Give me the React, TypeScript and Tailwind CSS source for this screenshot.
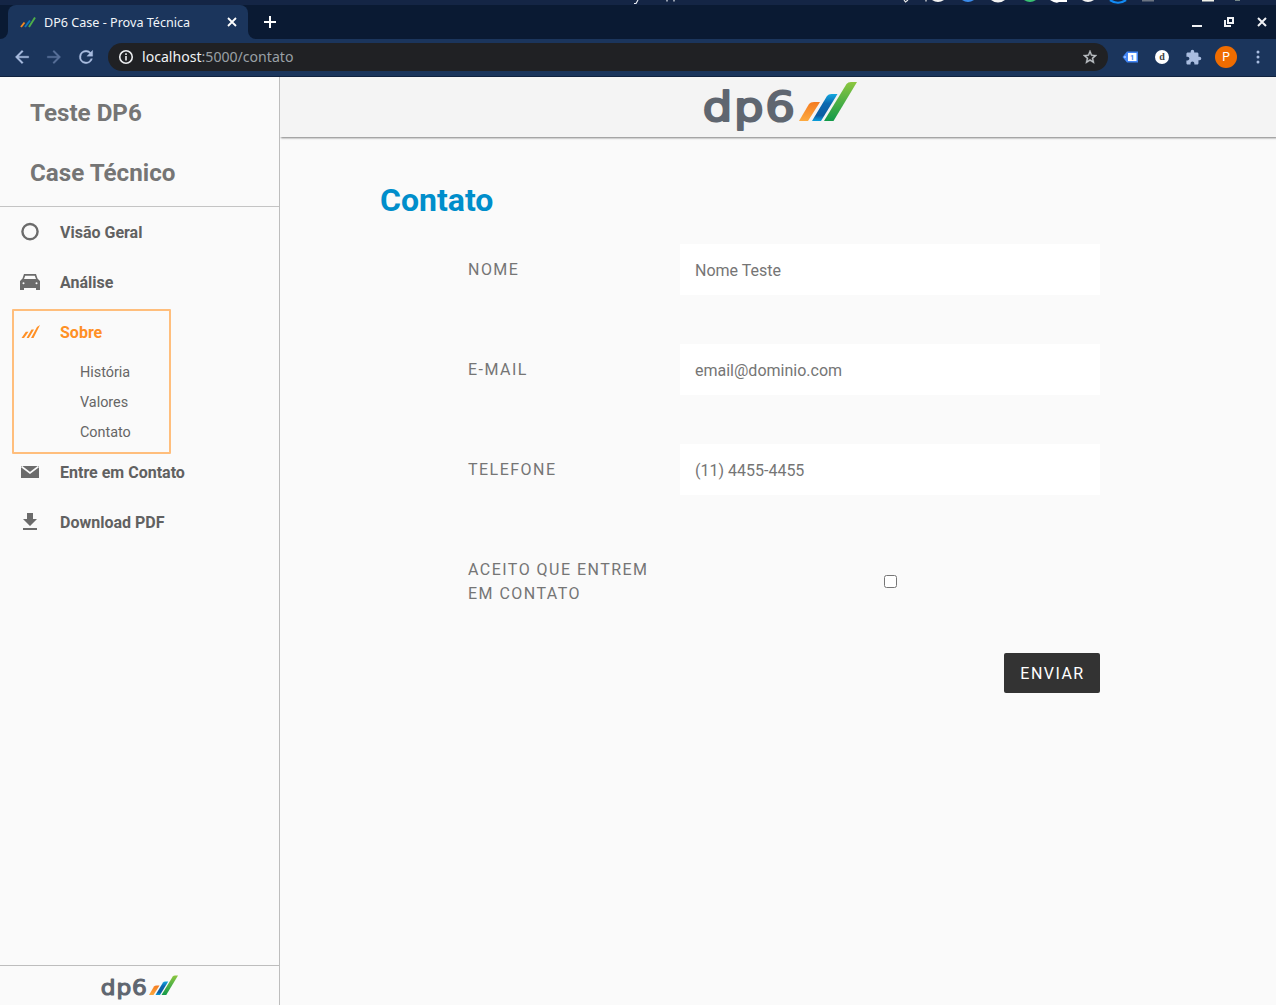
import React from 'react';

function Logo({ width, height, id }: { width: number; height: number; id: string }) {
  return (
    <svg width={width} height={height} viewBox="0 0 154 50" className="block overflow-visible" aria-label="dp6">
      <defs>
        <linearGradient id={`${id}-o`} x1="0" y1="1" x2="0" y2="0">
          <stop offset="0" stopColor="#fdaa3f" />
          <stop offset="1" stopColor="#f47b20" />
        </linearGradient>
        <linearGradient id={`${id}-b`} x1="0" y1="1" x2="0" y2="0">
          <stop offset="0" stopColor="#0aa0dc" />
          <stop offset="0.2" stopColor="#0a5ca2" />
          <stop offset="0.65" stopColor="#0a68b0" />
          <stop offset="1" stopColor="#12a8e0" />
        </linearGradient>
        <linearGradient id={`${id}-g`} x1="0" y1="1" x2="0" y2="0">
          <stop offset="0" stopColor="#129a4a" />
          <stop offset="1" stopColor="#8cc63f" />
        </linearGradient>
      </defs>
      <text
        transform="translate(-0.300 39.800) scale(1.11 0.97)"
        fontFamily="DejaVu Sans, sans-serif"
        fontSize="42"
        letterSpacing="1.5"
        fill="#5f6670"
        stroke="#5f6670"
        strokeWidth="2.200"
        strokeLinejoin="round"
      >
        dp6
      </text>
      <path d="M96 40L106 23Q107.500 21 111 21H117L105 40Z" fill={`url(#${id}-o)`} />
      <path d="M109 40L124 15Q125.500 13 128.500 13H134.500L118 40Z" fill={`url(#${id}-b)`} />
      <path d="M121 40L143.500 3Q145 1 148 1H154L130.500 40Z" fill={`url(#${id}-g)`} />
    </svg>
  );
}

function TopStrip() {
  return (
    <div className="h-[5px] shrink-0 overflow-hidden bg-[#142545]">
      <svg width="1276" height="5" viewBox="0 0 1276 5" className="block">
        <path d="M638 0L636 3.500H634M667 0V1.500M674 0V1.500" fill="none" stroke="#e8ecf2" strokeWidth="1.200" />
        <path d="M904 0L905.500 2L908 0M926 0V1.500" fill="none" stroke="#e8e8e8" strokeWidth="1.200" />
        <path d="M932 0Q938 4 944 0M991 0Q998 5 1005 0M1082 0Q1088 4 1094 0" fill="#f1f1f1" />
        <path d="M962 0Q968 4 974 0" fill="#3b8bea" />
        <path d="M1024 0Q1030 4 1036 0" fill="#38c172" />
        <path d="M1050 0Q1056 4 1059 2H1067V0" fill="#ffffff" />
        <path d="M1110 0Q1118 5.500 1126 0" fill="none" stroke="#128bf5" strokeWidth="2.200" />
        <path d="M1142 0H1154V1.500H1142Z" fill="#6b7482" />
        <path d="M1202 0H1214V1.500H1202Z" fill="#f1f1e8" />
        <path d="M1235 0H1240V1H1235Z" fill="#788" />
      </svg>
    </div>
  );
}

function TabBar() {
  return (
    <div className="flex h-[34px] shrink-0 bg-[#0a1a33] text-white">
      <div className="flex w-2 items-end bg-[#1b355c]">
        <div className="h-[34px] w-2 rounded-br-lg bg-[#0a1a33]" />
      </div>
      <div className="flex w-[240px] items-center rounded-t-lg bg-[#1b355c] pl-3 pr-[11px]">
        <svg width="16" height="16" viewBox="0 0 16 16" fill="none" strokeWidth="1.900">
          <path d="M1 13L4.500 8.500" stroke="#f58a20" />
          <path d="M5 13L10 6.500" stroke="#0e79bd" />
          <path d="M9 13L15 3.500" stroke="#4eae49" />
        </svg>
        <span className="ml-2 flex-1 whitespace-nowrap pt-px font-['Noto_Sans',sans-serif] text-[12.6px] leading-4 text-[#f2f5f9]">DP6 Case - Prova Técnica</span>
        <svg width="10" height="10" viewBox="0 0 10 10" stroke="#fff" strokeWidth="1.800">
          <path d="M1 1L9 9M9 1L1 9" />
        </svg>
      </div>
      <div className="w-2 bg-[#1b355c]">
        <div className="h-full w-2 rounded-bl-lg bg-[#0a1a33]" />
      </div>
      <svg width="12" height="12" viewBox="0 0 12 12" className="ml-2 mt-[11px]" stroke="#fff" strokeWidth="2">
        <path d="M6 0V12M0 6H12" />
      </svg>
      <div className="ml-auto flex pr-[9px] pt-3">
        <svg width="76" height="12" viewBox="0 0 76 12" fill="none" stroke="#f0f2f5">
          <path d="M1 9H11" strokeWidth="2" />
          <path d="M37 1H42V6H37Z" strokeWidth="2" />
          <path d="M34 3V9H40" strokeWidth="2" />
          <path d="M67 1L75 9M75 1L67 9" strokeWidth="2" />
        </svg>
      </div>
    </div>
  );
}

function Toolbar() {
  return (
    <div className="flex h-[38px] shrink-0 items-center border-b border-[#10223f] bg-[#1b355c] pb-px">
      <svg width="20" height="20" viewBox="0 0 24 24" className="ml-3" fill="#a9bde0" stroke="#a9bde0" strokeWidth="0.400">
        <path d="M20 11H7.830l5.590-5.590L12 4l-8 8 8 8 1.410-1.410L7.830 13H20z" />
      </svg>
      <svg width="20" height="20" viewBox="0 0 24 24" className="ml-3" fill="#587099" stroke="#587099" strokeWidth="0.400">
        <path d="M12 4l-1.410 1.410L16.170 11H4v2h12.170l-5.580 5.590L12 20l8-8z" />
      </svg>
      <svg width="20" height="20" viewBox="0 0 24 24" className="ml-3" fill="#a9bde0" stroke="#a9bde0" strokeWidth="0.400">
        <path d="M17.650 6.350A7.960 7.960 0 0 0 12 4a8 8 0 1 0 7.730 10h-2.080A6 6 0 1 1 12 6c1.660 0 3.140.690 4.220 1.780L13 11h7V4z" />
      </svg>
      <div className="ml-3 flex h-7 w-[1000px] items-center rounded-full bg-[#202124] pl-2.5 pr-2.5">
        <svg width="16" height="16" viewBox="0 0 16 16" fill="none" stroke="#eceef0">
          <circle cx="8" cy="8" r="6.250" strokeWidth="1.600" />
          <path d="M8 7V11.500M8 4.300V5.900" strokeWidth="1.600" />
        </svg>
        <span className="ml-2 flex-1 font-['Noto_Sans',sans-serif] text-[14.1px] leading-5 text-[#9aa0a6]">
          <span className="text-[#f1f3f4]">localhost</span>:5000/contato
        </span>
        <svg width="16" height="16" viewBox="0 0 24 24" fill="#bdc1c6" stroke="#bdc1c6" strokeWidth="0.500">
          <path d="M22.500 9.240l-7.560-.650L12 1.500 9.060 8.600 1.500 9.240l5.730 4.970L5.510 21.700 12 17.770l6.490 3.930-1.710-7.490zM12 15.400l-3.760 2.270 1-4.280-3.320-2.880 4.380-.380L12 6.100l1.710 4.040 4.380.380-3.320 2.880 1 4.280z" />
        </svg>
      </div>
      <svg width="17" height="12" viewBox="0 0 17 12" className="ml-[14px]">
        <path d="M5 .5H16V11.500H5L.5 6Z" fill="#4285f4" />
        <rect x="6" y="2" width="8.500" height="8" fill="#fff" />
        <circle cx="3" cy="6" r=".8" fill="#fff" />
        <text x="10.200" y="8.700" textAnchor="middle" fontSize="7.500" fontWeight="700" fontFamily="Roboto, sans-serif" fill="#4285f4">1</text>
      </svg>
      <div className="ml-4 flex size-[14px] items-center justify-center rounded-full bg-white font-['Liberation_Serif',serif] text-[10px] font-bold leading-none text-[#444]">d</div>
      <svg width="17" height="17" viewBox="0 0 24 24" className="ml-4" fill="#a9bde0">
        <path d="M20.500 11H19V7c0-1.100-.9-2-2-2h-4V3.500a2.500 2.500 0 0 0-5 0V5H4c-1.100 0-1.990.9-1.990 2v3.800H3.500c1.490 0 2.700 1.210 2.700 2.700s-1.210 2.700-2.700 2.700H2V20c0 1.100.9 2 2 2h3.800v-1.500c0-1.490 1.210-2.700 2.700-2.700s2.700 1.210 2.700 2.700V22H17c1.100 0 2-.9 2-2v-4h1.500a2.500 2.500 0 0 0 0-5z" />
      </svg>
      <div className="ml-[13px] flex size-[22px] items-center justify-center rounded-full bg-[#ef6c00] font-['Roboto',sans-serif] text-[12px] text-white">P</div>
      <svg width="4" height="16" viewBox="0 0 4 16" className="ml-[19px]" fill="#a9bde0">
        <circle cx="2" cy="3" r="1.500" />
        <circle cx="2" cy="8" r="1.500" />
        <circle cx="2" cy="13" r="1.500" />
      </svg>
    </div>
  );
}

function NavItem({ label, active, children }: { label: string; active?: boolean; children: React.ReactNode }) {
  return (
    <a className={`flex h-[50px] items-center pl-5 text-[16px] font-bold ${active ? 'text-[#ff9025]' : 'text-[#616161]'}`}>
      <svg width="20" height="20" viewBox="0 0 20 20" className={active ? 'mr-5 text-[#ff9025]' : 'mr-5 text-[#6b6b6b]'} fill="currentColor">
        {children}
      </svg>
      <span className="pt-0.5">{label}</span>
    </a>
  );
}

function Sidebar() {
  return (
    <aside className="flex w-[280px] shrink-0 flex-col border-r border-[#bdbdbd]">
      <div className="h-[130px] border-b border-[#c4c4c4] pl-[30px] pt-1.5 text-[24.2px] font-bold leading-[60px] text-[#757575]">
        <div>Teste DP6</div>
        <div>Case Técnico</div>
      </div>
      <nav className="relative">
        <NavItem label="Visão Geral">
          <circle cx="10" cy="9.600" r="7.600" fill="none" stroke="currentColor" strokeWidth="2.400" />
        </NavItem>
        <NavItem label="Análise">
          <path fillRule="evenodd" d="M4 2H16L17.500 6.500L20 9V18H16V16H4V18H0V9L2.500 6.500ZM5.200 3.700L4 7H16L14.800 3.700ZM3.500 10.200A1 1 0 1 0 3.500 12.200A1 1 0 1 0 3.500 10.200ZM16.500 10.200A1 1 0 1 0 16.500 12.200A1 1 0 1 0 16.500 10.200Z" />
        </NavItem>
        <NavItem label="Sobre" active>
          <path d="M1.500 16L5.800 9.800H8.500L4 16ZM6.500 16L11.500 7.500H14L8.800 16ZM11 16L17 5L20 3L13.500 16Z" />
        </NavItem>
        <div className="pb-0.5 pl-20 pt-px text-[14.4px] leading-[30px] text-[#666]">
          <div>História</div>
          <div>Valores</div>
          <div>Contato</div>
        </div>
        <div className="-mt-[3px]">
          <NavItem label="Entre em Contato">
            <path d="M1 4H19V16H1Z" />
            <path d="M1.500 4.500L10 11L18.500 4.500" fill="none" stroke="#fafafa" strokeWidth="1.600" />
          </NavItem>
          <NavItem label="Download PDF">
            <path d="M7 1H13V7H17L10 14L3 7H7ZM3 16H17V18H3Z" />
          </NavItem>
        </div>
        <div className="pointer-events-none absolute left-[12px] top-[102px] h-[145px] w-[159px] rounded-[1px] border-2 border-[#ffbe7c]" />
      </nav>
      <div className="mt-auto flex h-10 justify-center border-t border-[#bdbdbd] pt-[9px]">
        <Logo width={77} height={25} id="foot" />
      </div>
    </aside>
  );
}

function Field({ label, placeholder }: { label: string; placeholder: string }) {
  return (
    <div className="mb-[50px] flex h-[50px]">
      <label className="w-[212px] pt-[14px] text-[16px] leading-6 tracking-[1.47px] text-[#757575]">{label}</label>
      <input className="h-[51px] w-[420px] bg-white px-[15px] pt-[2px] text-[16px] placeholder:text-[#757575]" placeholder={placeholder} />
    </div>
  );
}

export default function App() {
  return (
    <div className="flex h-[1005px] w-[1276px] flex-col overflow-hidden bg-[#fafafa] font-['Roboto',sans-serif]">
      <TopStrip />
      <TabBar />
      <Toolbar />
      <div className="flex min-h-0 flex-1">
        <Sidebar />
        <main className="flex-1 overflow-hidden">
          <header className="flex h-[60px] justify-center bg-[#f4f4f4] pl-1 pt-1 shadow-[1px_1px_2px_rgba(0,0,0,0.5)]">
            <Logo width={154} height={50} id="head" />
          </header>
          <h1 className="ml-[100px] mt-[43px] text-[32px] font-bold leading-10 text-[#008ecb]">Contato</h1>
          <form className="ml-[188px] mt-6 w-[632px]">
            <Field label="NOME" placeholder="Nome Teste" />
            <Field label="E-MAIL" placeholder="email@dominio.com" />
            <Field label="TELEFONE" placeholder="(11) 4455-4455" />
            <div className="flex pt-[14px]">
              <label className="w-[212px] text-[16px] leading-6 tracking-[1.47px] text-[#757575]">
                ACEITO QUE ENTREM
                <br />
                EM CONTATO
              </label>
              <div className="flex w-[420px] items-center justify-center pb-px">
                <input type="checkbox" className="size-[13px]" />
              </div>
            </div>
            <button type="button" className="ml-auto mt-[47px] block h-10 w-24 rounded-[2px] bg-[#333] pl-px pt-0.5 text-[16px] tracking-[1.47px] text-white">ENVIAR</button>
          </form>
        </main>
      </div>
    </div>
  );
}
